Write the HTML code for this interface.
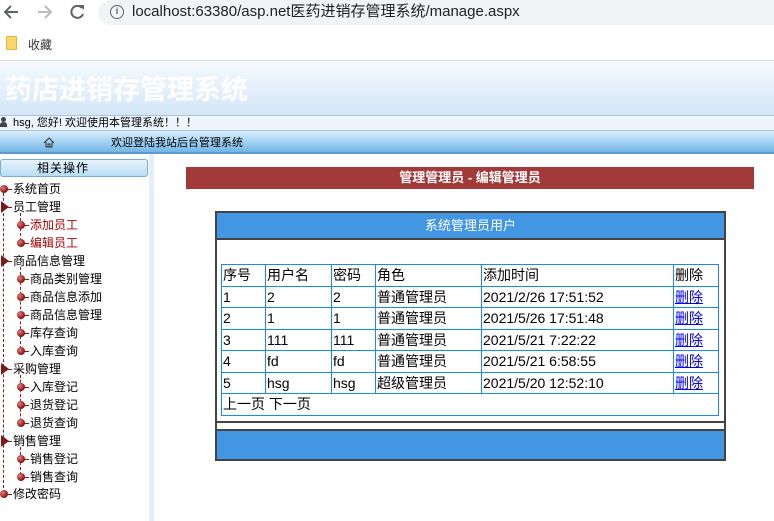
<!DOCTYPE html>
<html><head><meta charset="utf-8"><style>
*{margin:0;padding:0;box-sizing:border-box}
body{width:774px;height:521px;overflow:hidden;background:#fff;font-family:"Liberation Sans","Noto Sans CJK SC",sans-serif;position:relative}
.a{position:absolute}
.tr{position:absolute;font-size:12px;line-height:14px;white-space:nowrap;color:#000}
.dot{position:absolute;width:8px;height:8px;border-radius:50%;background:radial-gradient(circle at 35% 35%,#e08080,#9a1a1a 60%,#6a0a0a)}
.tri{position:absolute;width:0;height:0;border-top:6px solid transparent;border-bottom:6px solid transparent;border-left:8px solid #7a1a1a}
.dash{position:absolute;border-left:1px dashed #8a1a1a}
.hd{position:absolute;border-top:1px dashed #8a1a1a;width:5px}
table{border-collapse:collapse}
td{border:1px solid #1e88e5;font-size:14px;height:21.5px;padding:0 1px;line-height:20px;white-space:nowrap}
a{color:#00e;text-decoration:underline}
</style></head><body>
<div class="a" style="left:0;top:0;width:774px;height:61px;background:#fff;border-bottom:1px solid #dadce0"></div>
<svg class="a" style="left:2px;top:2px" width="90" height="20" viewBox="0 0 90 20">
<path d="M16 10H4M9 4L3 10l6 6" stroke="#5f6368" stroke-width="2" fill="none"/>
<path d="M36 10h12M43 4l6 6-6 6" stroke="#bbb" stroke-width="2" fill="none"/>
<path d="M80 6a6 6 0 1 0 1 6" stroke="#5f6368" stroke-width="2" fill="none"/><path d="M77 3h5v5z" fill="#5f6368"/>
</svg>
<div class="a" style="left:98px;top:0;width:700px;height:25px;background:#f1f3f4;border-radius:13px 0 0 13px"></div>
<div class="a" style="left:110px;top:5px;width:14px;height:14px;border:1.5px solid #5f6368;border-radius:50%;font-size:9px;line-height:11px;text-align:center;color:#5f6368;font-weight:bold">i</div>
<div class="a" style="left:132px;top:2px;font-size:15px;line-height:20px;color:#202124">localhost:63380/asp.net医药进销存管理系统/manage.aspx</div>
<div class="a" style="left:6px;top:36px;width:11px;height:14px;background:#f9d66b;border:1px solid #e0b840;border-radius:1px"></div>
<div class="a" style="left:28px;top:36px;font-size:12px;color:#333">收藏</div>
<div class="a" style="left:0;top:62px;width:774px;height:53px;background:linear-gradient(#f4f9fe,#d4e6f8)"></div>
<div class="a" style="left:5px;top:74px;font-size:27px;font-weight:bold;color:#fff;line-height:32px">药店进销存管理系统</div>
<div class="a" style="left:0;top:115px;width:774px;height:16px;background:#eef5fc;border-top:1px solid #a8c4e0;border-bottom:1px solid #a8c4e0"></div>
<div class="a" style="left:1px;top:117px;width:5px;height:5px;background:#444;border-radius:50%"></div>
<div class="a" style="left:0;top:122px;width:7px;height:5px;background:#444;border-radius:3px 3px 0 0"></div>
<div class="a" style="left:13px;top:116px;font-size:11px;line-height:14px">hsg, 您好! 欢迎使用本管理系统！！！</div>
<div class="a" style="left:0;top:131px;width:774px;height:23px;background:linear-gradient(#d8ecfa,#a5d3f3 50%,#74b4e4);border-bottom:2px solid #5a9ad0"></div>
<svg class="a" style="left:43px;top:137px" width="12" height="11" viewBox="0 0 12 11"><path d="M1 6L6 1l5 5M3 5v5h6V5M5 10V7h2v3" stroke="#333" fill="none"/></svg>
<div class="a" style="left:111px;top:136px;font-size:11px;line-height:14px">欢迎登陆我站后台管理系统</div>
<div class="a" style="left:149px;top:154px;width:5px;height:367px;background:#e4effb"></div>
<div class="a" style="left:0;top:159px;width:148px;height:18px;background:linear-gradient(#e8f4fd,#b8dcf6);border:1px solid #7aaad8;border-radius:3px"></div>
<div class="a" style="left:37px;top:161px;font-size:12px;line-height:14px;letter-spacing:1px">相关操作</div>
<div class="dash" style="left:3px;top:193px;height:300px"></div>
<div class="dash" style="left:20px;top:213px;height:33px"></div>
<div class="dash" style="left:20px;top:267px;height:87px"></div>
<div class="dash" style="left:20px;top:375px;height:51px"></div>
<div class="dash" style="left:20px;top:447px;height:33px"></div>
<div class="dot" style="left:0;top:185px"></div><div class="hd" style="left:7px;top:189px"></div><div class="tr" style="left:13px;top:182px">系统首页</div>
<div class="tri" style="left:1px;top:201px"></div><div class="hd" style="left:7px;top:207px"></div><div class="tr" style="left:13px;top:200px">员工管理</div>
<div class="dot" style="left:17px;top:221px"></div><div class="hd" style="left:24px;top:225px"></div><div class="tr" style="left:30px;top:218px;color:#a00">添加员工</div>
<div class="dot" style="left:17px;top:239px"></div><div class="hd" style="left:24px;top:243px"></div><div class="tr" style="left:30px;top:236px;color:#a00">编辑员工</div>
<div class="tri" style="left:1px;top:255px"></div><div class="hd" style="left:7px;top:261px"></div><div class="tr" style="left:13px;top:254px">商品信息管理</div>
<div class="dot" style="left:17px;top:275px"></div><div class="hd" style="left:24px;top:279px"></div><div class="tr" style="left:30px;top:272px">商品类别管理</div>
<div class="dot" style="left:17px;top:293px"></div><div class="hd" style="left:24px;top:297px"></div><div class="tr" style="left:30px;top:290px">商品信息添加</div>
<div class="dot" style="left:17px;top:311px"></div><div class="hd" style="left:24px;top:315px"></div><div class="tr" style="left:30px;top:308px">商品信息管理</div>
<div class="dot" style="left:17px;top:329px"></div><div class="hd" style="left:24px;top:333px"></div><div class="tr" style="left:30px;top:326px">库存查询</div>
<div class="dot" style="left:17px;top:347px"></div><div class="hd" style="left:24px;top:351px"></div><div class="tr" style="left:30px;top:344px">入库查询</div>
<div class="tri" style="left:1px;top:363px"></div><div class="hd" style="left:7px;top:369px"></div><div class="tr" style="left:13px;top:362px">采购管理</div>
<div class="dot" style="left:17px;top:383px"></div><div class="hd" style="left:24px;top:387px"></div><div class="tr" style="left:30px;top:380px">入库登记</div>
<div class="dot" style="left:17px;top:401px"></div><div class="hd" style="left:24px;top:405px"></div><div class="tr" style="left:30px;top:398px">退货登记</div>
<div class="dot" style="left:17px;top:419px"></div><div class="hd" style="left:24px;top:423px"></div><div class="tr" style="left:30px;top:416px">退货查询</div>
<div class="tri" style="left:1px;top:435px"></div><div class="hd" style="left:7px;top:441px"></div><div class="tr" style="left:13px;top:434px">销售管理</div>
<div class="dot" style="left:17px;top:455px"></div><div class="hd" style="left:24px;top:459px"></div><div class="tr" style="left:30px;top:452px">销售登记</div>
<div class="dot" style="left:17px;top:473px"></div><div class="hd" style="left:24px;top:477px"></div><div class="tr" style="left:30px;top:470px">销售查询</div>
<div class="dot" style="left:0;top:490px"></div><div class="hd" style="left:7px;top:494px"></div><div class="tr" style="left:13px;top:487px">修改密码</div>
<div class="a" style="left:186px;top:167px;width:568px;height:22px;background:#a33a3a;color:#fff;font-weight:bold;font-size:13px;line-height:22px;text-align:center">管理管理员 - 编辑管理员</div>
<div class="a" style="left:215px;top:211px;width:511px;height:250px;border:2px solid #444;background:#fff"></div>
<div class="a" style="left:217px;top:213px;width:507px;height:27px;background:#4296e2;border-bottom:2px solid #444;color:#fff;font-size:13px;line-height:26px;text-align:center">系统管理员用户</div>
<div class="a" style="left:217px;top:429px;width:507px;height:30px;background:#4296e2;border-top:2px solid #444"></div>
<div class="a" style="left:217px;top:421px;width:507px;height:2px;background:#444"></div>
<table class="a" style="left:221px;top:264px;width:498px">
<tr><td style="width:44px">序号</td><td style="width:66px">用户名</td><td style="width:44px">密码</td><td style="width:106px">角色</td><td style="width:192px">添加时间</td><td>删除</td></tr>
<tr><td>1</td><td>2</td><td>2</td><td>普通管理员</td><td>2021/2/26 17:51:52</td><td><a>删除</a></td></tr>
<tr><td>2</td><td>1</td><td>1</td><td>普通管理员</td><td>2021/5/26 17:51:48</td><td><a>删除</a></td></tr>
<tr><td>3</td><td>111</td><td>111</td><td>普通管理员</td><td>2021/5/21 7:22:22</td><td><a>删除</a></td></tr>
<tr><td>4</td><td>fd</td><td>fd</td><td>普通管理员</td><td>2021/5/21 6:58:55</td><td><a>删除</a></td></tr>
<tr><td>5</td><td>hsg</td><td>hsg</td><td>超级管理员</td><td>2021/5/20 12:52:10</td><td><a>删除</a></td></tr>
<tr><td colspan="6">上一页 下一页</td></tr>
</table>
</body></html>
